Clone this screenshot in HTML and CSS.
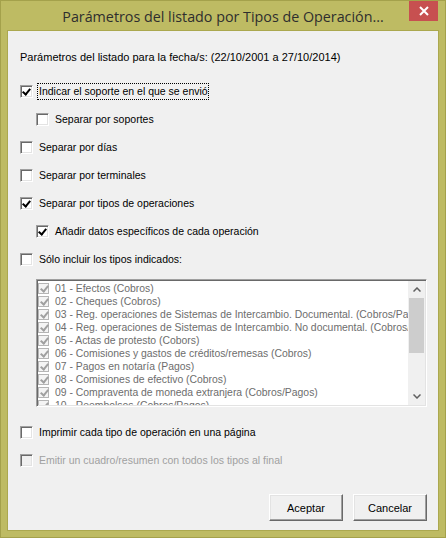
FILE: index.html
```html
<!DOCTYPE html>
<html lang="es">
<head>
<meta charset="utf-8">
<title>Parámetros del listado</title>
<link rel="stylesheet" href="styles.css">
</head>
<body>
<div class="window">
  <div class="titlebar">
    <span></span>
    <span class="title">Parámetros del listado por Tipos de Operación...</span>
    <button class="close" aria-label="Cerrar">
      <svg width="10" height="10" viewBox="0 0 10 10"><path d="M1 1 L9 9 M9 1 L1 9" stroke="#fff" stroke-width="2" fill="none"/></svg>
    </button>
  </div>
  <div class="content">
    <div class="header">Parámetros del listado para la fecha/s: (22/10/2001 a 27/10/2014)</div>
    <div class="rows">
      <div class="row"><span class="cb checked"></span><span class="lbl focus">Indicar el soporte en el que se envió</span></div>
      <div class="row sub"><span class="cb"></span><span class="lbl">Separar por soportes</span></div>
      <div class="row"><span class="cb"></span><span class="lbl">Separar por días</span></div>
      <div class="row"><span class="cb"></span><span class="lbl">Separar por terminales</span></div>
      <div class="row"><span class="cb checked"></span><span class="lbl">Separar por tipos de operaciones</span></div>
      <div class="row sub"><span class="cb checked"></span><span class="lbl">Añadir datos específicos de cada operación</span></div>
      <div class="row"><span class="cb"></span><span class="lbl">Sólo incluir los tipos indicados:</span></div>
    </div>
    <div class="listbox">
      <div class="items">
        <div class="item"><span class="mini"></span><span class="itxt">01 - Efectos (Cobros)</span></div>
        <div class="item"><span class="mini"></span><span class="itxt">02 - Cheques (Cobros)</span></div>
        <div class="item"><span class="mini"></span><span class="itxt">03 - Reg. operaciones de Sistemas de Intercambio. Documental. (Cobros/Pagos)</span></div>
        <div class="item"><span class="mini"></span><span class="itxt">04 - Reg. operaciones de Sistemas de Intercambio. No documental. (Cobros/Pagos)</span></div>
        <div class="item"><span class="mini"></span><span class="itxt">05 - Actas de protesto (Cobors)</span></div>
        <div class="item"><span class="mini"></span><span class="itxt">06 - Comisiones y gastos de créditos/remesas (Cobros)</span></div>
        <div class="item"><span class="mini"></span><span class="itxt">07 - Pagos en notaría (Pagos)</span></div>
        <div class="item"><span class="mini"></span><span class="itxt">08 - Comisiones de efectivo (Cobros)</span></div>
        <div class="item"><span class="mini"></span><span class="itxt">09 - Compraventa de moneda extranjera (Cobros/Pagos)</span></div>
        <div class="item"><span class="mini"></span><span class="itxt">10 - Reembolsos (Cobros/Pagos)</span></div>
      </div>
      <div class="scrollbar">
        <div class="arrow">
          <svg width="8" height="5" viewBox="0 0 8 5"><path d="M0.5 4.5 L4 1 L7.5 4.5" stroke="#606060" stroke-width="1.5" fill="none"/></svg>
        </div>
        <div class="thumb"></div>
        <div class="track"></div>
        <div class="arrow">
          <svg width="8" height="5" viewBox="0 0 8 5"><path d="M0.5 0.5 L4 4 L7.5 0.5" stroke="#606060" stroke-width="1.5" fill="none"/></svg>
        </div>
      </div>
    </div>
    <div class="row after"><span class="cb"></span><span class="lbl">Imprimir cada tipo de operación en una página</span></div>
    <div class="row disabled"><span class="cb"></span><span class="lbl">Emitir un cuadro/resumen con todos los tipos al final</span></div>
    <div class="buttons">
      <button class="btn">Aceptar</button>
      <button class="btn">Cancelar</button>
    </div>
  </div>
</div>
</body>
</html>
```
FILE: styles.css
```css
* { box-sizing: border-box; }
html, body { margin: 0; padding: 0; }
body {
  width: 446px;
  height: 538px;
  font-family: "Liberation Sans", Arial, sans-serif;
  font-size: 11px;
  color: #000;
}
.window {
  width: 446px;
  height: 538px;
  background: #bebb63;
  border: 1px solid #a4a14b;
  display: flex;
  flex-direction: column;
}
.titlebar {
  height: 29px;
  display: grid;
  grid-template-columns: 1fr auto 1fr;
  align-items: center;
}
.title {
  font-family: "Open Sans", "Noto Sans", sans-serif;
  font-size: 14.3px;
  color: #2e2e2e;
  white-space: nowrap;
  padding-top: 1px;
}
.close {
  justify-self: end;
  align-self: start;
  margin-right: 7px;
  width: 29px;
  height: 20px;
  border: 0;
  padding: 0;
  background: #c75050;
  display: flex;
  align-items: center;
  justify-content: center;
}
.content {
  flex: 1;
  margin: 0 6px 6px 6px;
  border: 1px solid #aba84f;
  background: #f0f0f0;
  padding: 20px 11px 0 12px;
  display: flex;
  flex-direction: column;
}
.header {
  line-height: 13px;
  white-space: nowrap;
}
.rows { margin-top: 13px; }
.row {
  height: 28px;
  display: flex;
  align-items: center;
  gap: 4px;
}
.row.sub { padding-left: 16px; }
.lbl {
  font-size: 10.5px;
  border: 1px solid transparent;
  padding: 1px 1px;
  line-height: 13px;
  white-space: nowrap;
}
.lbl.focus {
  border: 1px dotted #000;
  padding-right: 0;
}
.cb {
  width: 13px;
  height: 13px;
  flex: none;
  background: #fff;
  border: 1px solid;
  border-color: #a0a0a0 #fff #fff #a0a0a0;
  box-shadow: inset 1px 1px 0 #696969, inset -1px -1px 0 #e3e3e3;
  position: relative;
}
.cb.checked::after {
  content: "";
  position: absolute;
  left: 3px;
  top: 1px;
  width: 3px;
  height: 6px;
  border: solid #000;
  border-width: 0 2px 2px 0;
  transform: rotate(40deg);
}
.row.disabled .lbl { color: #a0a0a0; }
.row.disabled .cb { background: #f0f0f0; }
.listbox {
  margin-top: 6px;
  margin-left: 16px;
  width: 391px;
  height: 128px;
  background: #fff;
  border: 1px solid;
  border-color: #a0a0a0 #fff #fff #a0a0a0;
  box-shadow: inset 1px 1px 0 #696969, inset -1px -1px 0 #e3e3e3;
  display: grid;
  grid-template-columns: 1fr 17px;
  padding: 1px;
}
.items {
  overflow: hidden;
  padding-top: 1px;
}
.item {
  height: 13px;
  line-height: 13px;
  white-space: nowrap;
  color: #6d6d6d;
  display: flex;
  align-items: center;
  gap: 6px;
  font-size: 10.4px;
}
.itxt { flex: none; }
.mini {
  width: 11px;
  height: 11px;
  flex: none;
  border: 1px solid #b5b5b5;
  background: #f4f4f4;
  position: relative;
}
.mini::after {
  content: "";
  position: absolute;
  left: 3px;
  top: 0;
  width: 3px;
  height: 6px;
  border: solid #a0a0a0;
  border-width: 0 2px 2px 0;
  transform: rotate(40deg);
}
.scrollbar {
  background: #f0f0f0;
  display: flex;
  flex-direction: column;
}
.arrow {
  height: 17px;
  display: flex;
  align-items: center;
  justify-content: center;
  flex: none;
}
.thumb {
  height: 55px;
  margin: 0 1px;
  background: #cdcdcd;
  flex: none;
}
.track { flex: 1; }
.row.after { margin-top: 11px; }
.buttons {
  margin-top: 20px;
  display: flex;
  justify-content: flex-end;
  gap: 10px;
}
.btn {
  width: 74px;
  height: 27px;
  font-family: "Liberation Sans", Arial, sans-serif;
  font-size: 11px;
  color: #000;
  background: #f0f0f0;
  border: 1px solid;
  border-color: #fff #696969 #696969 #fff;
  box-shadow: inset -1px -1px 0 #a0a0a0, inset 1px 1px 0 #e3e3e3;
  padding: 0;
}
```
